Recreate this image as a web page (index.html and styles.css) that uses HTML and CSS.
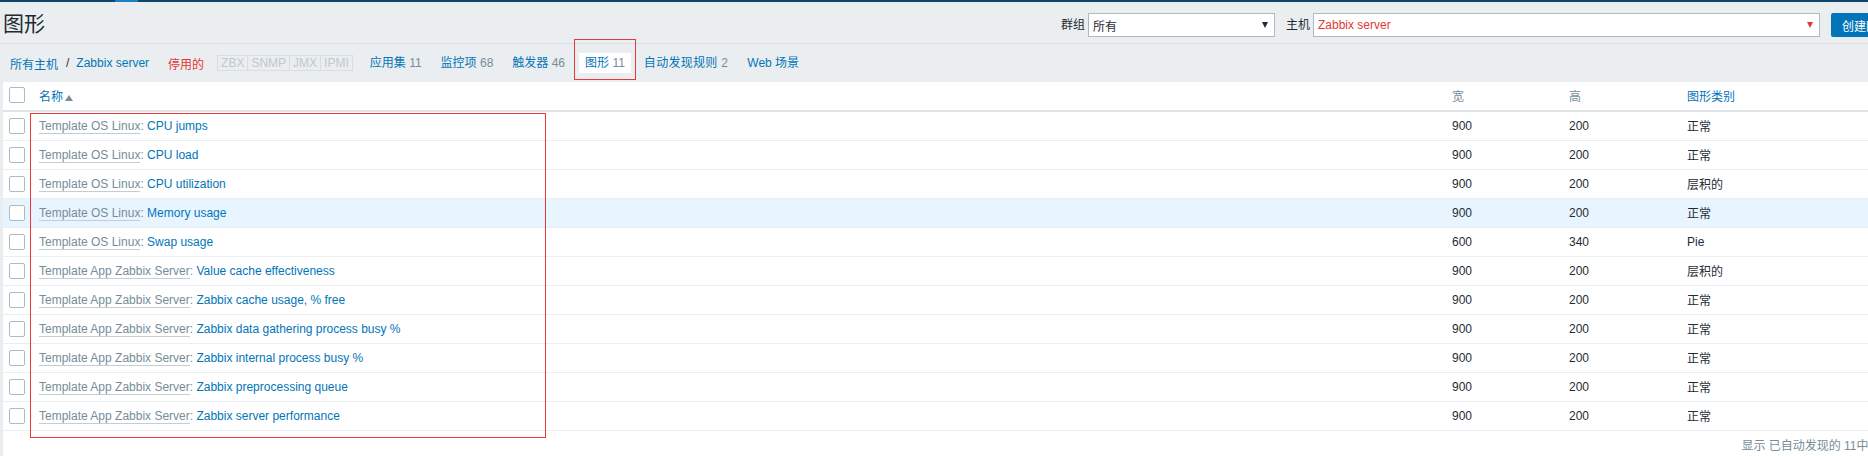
FILE: index.html
```html
<!DOCTYPE html>
<html lang="zh-CN">
<head>
<meta charset="utf-8">
<title>图形</title>
<link rel="stylesheet" href="styles.css">
</head>
<body>
<div class="page">
  <div class="topbar"><span class="topbar-gap"></span><span class="topbar-active"></span></div>
  <header class="header">
    <h1 class="title">图形</h1>
    <div class="filters">
      <span class="flabel">群组</span>
      <div class="select select-group"><span class="select-text">所有</span><i class="caret"></i></div>
      <span class="flabel flabel-host">主机</span>
      <div class="select select-host"><span class="select-text red">Zabbix server</span><i class="caret caret-red"></i></div>
      <button class="btn">创建图形</button>
    </div>
  </header>
  <nav class="nav">
    <a class="crumb">所有主机</a><span class="crumb-sep">/</span><a class="crumb">Zabbix server</a>
    <span class="disabled">停用的</span>
    <span class="status"><span>ZBX</span><span>SNMP</span><span>JMX</span><span>IPMI</span></span>
    <ul class="tabs">
      <li><a>应用集</a> <span class="cnt">11</span></li>
      <li><a>监控项</a> <span class="cnt">68</span></li>
      <li><a>触发器</a> <span class="cnt">46</span></li>
      <li class="active"><a>图形</a> <span class="cnt">11</span></li>
      <li class="wide"><a>自动发现规则</a> <span class="cnt">2</span></li>
      <li><a>Web 场景</a></li>
    </ul>
  </nav>
  <main class="content">
    <table class="list">
      <thead>
        <tr>
          <th class="c-check"><span class="checkbox"></span></th>
          <th class="c-name"><a class="sort zh">名称</a><i class="arrow-up"></i></th>
          <th class="c-w"><span class="zh">宽</span></th>
          <th class="c-h"><span class="zh">高</span></th>
          <th class="c-type"><a class="sort zh">图形类别</a></th>
        </tr>
      </thead>
      <tbody>
        <tr><td><span class="checkbox"></span></td><td><a class="tpl">Template OS Linux</a><span class="colon">: </span><a class="lnk">CPU jumps</a></td><td>900</td><td>200</td><td><span class="zh">正常</span></td></tr>
        <tr><td><span class="checkbox"></span></td><td><a class="tpl">Template OS Linux</a><span class="colon">: </span><a class="lnk">CPU load</a></td><td>900</td><td>200</td><td><span class="zh">正常</span></td></tr>
        <tr><td><span class="checkbox"></span></td><td><a class="tpl">Template OS Linux</a><span class="colon">: </span><a class="lnk">CPU utilization</a></td><td>900</td><td>200</td><td><span class="zh">层积的</span></td></tr>
        <tr class="hover"><td><span class="checkbox"></span></td><td><a class="tpl">Template OS Linux</a><span class="colon">: </span><a class="lnk">Memory usage</a></td><td>900</td><td>200</td><td><span class="zh">正常</span></td></tr>
        <tr><td><span class="checkbox"></span></td><td><a class="tpl">Template OS Linux</a><span class="colon">: </span><a class="lnk">Swap usage</a></td><td>600</td><td>340</td><td>Pie</td></tr>
        <tr><td><span class="checkbox"></span></td><td><a class="tpl">Template App Zabbix Server</a><span class="colon">: </span><a class="lnk">Value cache effectiveness</a></td><td>900</td><td>200</td><td><span class="zh">层积的</span></td></tr>
        <tr><td><span class="checkbox"></span></td><td><a class="tpl">Template App Zabbix Server</a><span class="colon">: </span><a class="lnk">Zabbix cache usage, % free</a></td><td>900</td><td>200</td><td><span class="zh">正常</span></td></tr>
        <tr><td><span class="checkbox"></span></td><td><a class="tpl">Template App Zabbix Server</a><span class="colon">: </span><a class="lnk">Zabbix data gathering process busy %</a></td><td>900</td><td>200</td><td><span class="zh">正常</span></td></tr>
        <tr><td><span class="checkbox"></span></td><td><a class="tpl">Template App Zabbix Server</a><span class="colon">: </span><a class="lnk">Zabbix internal process busy %</a></td><td>900</td><td>200</td><td><span class="zh">正常</span></td></tr>
        <tr><td><span class="checkbox"></span></td><td><a class="tpl">Template App Zabbix Server</a><span class="colon">: </span><a class="lnk">Zabbix preprocessing queue</a></td><td>900</td><td>200</td><td><span class="zh">正常</span></td></tr>
        <tr><td><span class="checkbox"></span></td><td><a class="tpl">Template App Zabbix Server</a><span class="colon">: </span><a class="lnk">Zabbix server performance</a></td><td>900</td><td>200</td><td><span class="zh">正常</span></td></tr>
      </tbody>
    </table>
    <div class="stats">显示 已自动发现的 11中的11</div>
  </main>
  <div class="mark mark-tab"></div>
  <div class="mark mark-names"></div>
</div>
</body>
</html>
```

FILE: styles.css
```css
html, body {
  margin: 0;
  padding: 0;
  overflow: hidden;
  background: #ebeef0;
}
body {
  font-family: "Liberation Sans", Arial, "Noto Sans CJK SC", sans-serif;
  font-size: 12px;
  color: #1f2c33;
}
a { color: #0275b8; text-decoration: none; }

.page {
  position: relative;
  width: 1905px;
  height: 456px;
}

/* top strip */
.topbar {
  display: flex;
  height: 2px;
  background: #0b4568;
}
.topbar-gap { width: 115px; }
.topbar-active { width: 23px; background: #1b7fc3; }

/* header */
.header {
  display: flex;
  align-items: center;
  height: 41px;
  padding: 0 4px 0 3px;
  border-bottom: 1px solid #dbe0e3;
}
.title {
  margin: 0;
  font-size: 21px;
  font-weight: normal;
  line-height: 24px;
  color: #1f2c33;
  padding-top: 2px;
}
.filters {
  display: flex;
  align-items: center;
  margin-left: auto;
  padding-top: 5px;
}
.flabel { margin-right: 3px; line-height: 14px; }
.flabel-host { margin-left: 11px; }
.select {
  display: flex;
  align-items: center;
  box-sizing: border-box;
  height: 24px;
  background: #fff;
  border: 1px solid #acbbc2;
  padding: 0 6px 0 4px;
}
.select-group { width: 187px; }
.select-host { width: 507px; }
.select-text { flex: 1; }
.red { color: #e33734; }
.caret {
  width: 0;
  height: 0;
  border-left: 3.5px solid transparent;
  border-right: 3.5px solid transparent;
  border-top: 6px solid #1f2c33;
}
.caret-red { border-top-color: #e33734; }
.btn {
  margin-left: 11px;
  height: 24px;
  padding: 0 11px;
  border: 0;
  border-radius: 2px;
  background: #0275b8;
  color: #fff;
  font: inherit;
}

/* navigation row */
.nav {
  display: flex;
  align-items: center;
  height: 38px;
  padding-left: 10px;
}
.crumb-sep { margin: 0 7px 0 8px; color: #1f2c33; }
.disabled { color: #e33734; margin-left: 19px; }
.status {
  display: flex;
  margin-left: 13px;
  border: 1px solid #d7dde1;
  height: 14px;
}
.status span {
  padding: 0 3px;
  line-height: 14px;
  color: #bfc8cd;
  border-left: 1px solid #d7dde1;
}
.status span:first-child { border-left: 0; }
.tabs {
  display: flex;
  list-style: none;
  margin: 0 0 0 11px;
  padding: 0;
  gap: 7px;
}
.tabs li {
  padding: 0 6px;
  line-height: 20px;
}
.tabs li.active { background: #fff; margin-left: 1px; }
.tabs li.wide { letter-spacing: 0.3px; }
.cnt { color: #768d99; }

/* table */
.content {
  margin-left: 3px;
  background: #fff;
  height: 374px;
}
.list {
  width: 100%;
  border-collapse: collapse;
  table-layout: fixed;
}
.list th, .list td {
  padding: 0;
  text-align: left;
  vertical-align: middle;
  white-space: nowrap;
}
.list th {
  height: 28px;
  font-weight: normal;
  color: #768d99;
  border-bottom: 2px solid #dfe4e7;
}
.list td {
  height: 28px;
  border-bottom: 1px solid #ebeef0;
}
.list tr.hover td { background: #e8f5ff; }
.zh { vertical-align: 1px; }
.c-check { width: 36px; }
.c-name { width: 1413px; }
.c-w { width: 117px; }
.c-h { width: 118px; }
.checkbox {
  display: block;
  box-sizing: border-box;
  width: 16px;
  height: 16px;
  margin-left: 6px;
  border: 1px solid #acbbc2;
  border-radius: 2px;
  background: #fff;
}
.list th .checkbox { margin-top: -2px; }
.sort { color: #0275b8; }
.arrow-up {
  display: inline-block;
  width: 0;
  height: 0;
  margin-left: 2px;
  border-left: 4px solid transparent;
  border-right: 4px solid transparent;
  border-bottom: 6px solid #768d99;
  vertical-align: 1px;
}
.tpl {
  color: #768d99;
  border-bottom: 1px solid #c3cdd2;
}
.colon { color: #768d99; }
.lnk { color: #0275b8; }

.stats {
  text-align: right;
  padding: 8px 12px 0 0;
  color: #768d99;
  line-height: 14px;
}

/* red annotation frames drawn over the screenshot */
.mark {
  position: absolute;
  border: 1px solid #e8383b;
  box-sizing: border-box;
}
.mark-tab { left: 574px; top: 39px; width: 62px; height: 41px; }
.mark-names { left: 30px; top: 113px; width: 516px; height: 325px; }
```
